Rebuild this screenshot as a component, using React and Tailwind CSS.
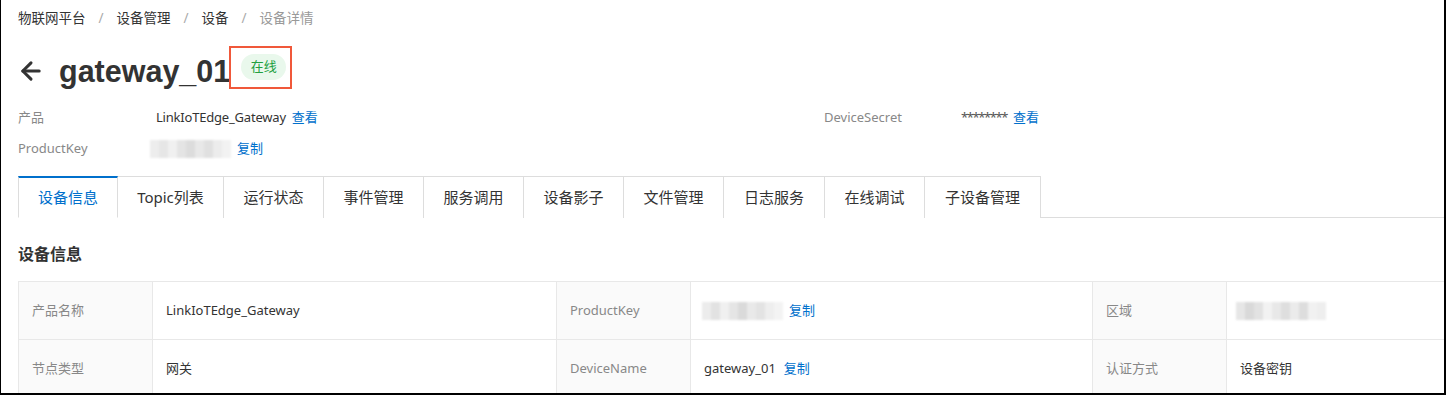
import { ArrowLeft } from "lucide-react";

const FONT = {
  fontFamily: '"Noto Sans", "Noto Sans CJK SC", sans-serif',
};

const crumbs = ["物联网平台", "设备管理", "设备", "设备详情"];

const tabs = [
  { label: "设备信息", w: "w-[100px]" },
  { label: "Topic列表", w: "w-[106px]" },
  { label: "运行状态", w: "w-[100px]" },
  { label: "事件管理", w: "w-[100px]" },
  { label: "服务调用", w: "w-[100px]" },
  { label: "设备影子", w: "w-[100px]" },
  { label: "文件管理", w: "w-[100px]" },
  { label: "日志服务", w: "w-[101px]" },
  { label: "在线调试", w: "w-[100px]" },
  { label: "子设备管理", w: "w-[116px]" },
];

// mosaic stand-in for the masked values in the screenshot
const Blurred = ({ shades, className = "" }) => (
  <span className={`inline-flex h-[18px] blur-[1.2px] ${className}`}>
    {shades.map((c, i) => (
      <span key={i} className="w-[9px] h-full" style={{ backgroundColor: c }} />
    ))}
  </span>
);

const Copy = ({ children = "复制" }) => (
  <a className="text-[#0070cc] cursor-pointer ml-[6px]">{children}</a>
);

const LabelCell = ({ children }) => (
  <div className="bg-[#fafafa] border-r border-b border-[#e8e8e8] pl-[13px] flex items-center text-[#888]">
    {children}
  </div>
);

const ValueCell = ({ children, last }) => (
  <div
    className={`border-b border-[#e8e8e8] pl-[13px] flex items-center text-[#333] ${
      last ? "" : "border-r"
    }`}
  >
    {children}
  </div>
);

export default function App() {
  return (
    <div
      style={FONT}
      className="w-[1446px] h-[395px] overflow-hidden bg-white border-l border-r-2 border-b-2 border-black text-[#333]"
    >
      <div className="pl-[17px]">
        {/* Breadcrumb */}
        <div className="h-[36px] flex items-center text-[13.5px]">
          {crumbs.map((c, i) => (
            <span key={c} className="flex items-center">
              <span className={i === crumbs.length - 1 ? "text-[#999]" : "text-[#333]"}>
                {c}
              </span>
              {i < crumbs.length - 1 && (
                <span className="text-[#aaa] mx-[13px]">/</span>
              )}
            </span>
          ))}
        </div>

        {/* Title */}
        <div className="mt-[10px] h-[50px] flex items-center">
          <ArrowLeft size={28} strokeWidth={2.6} className="text-[#333] -ml-[1px]" />
          <h1
            className="ml-[14px] text-[30.5px] font-bold text-[#333] leading-none"
            style={{ fontFamily: '"Liberation Sans", Arial, sans-serif' }}
          >
            gateway_01
          </h1>
          <div className="relative ml-[11px] mb-[9px]">
            <span className="flex items-center justify-center w-[45px] h-[26px] rounded-full bg-[#e9f8ec] text-[#22a03f] text-[13px]">
              在线
            </span>
            <div className="absolute -left-[12px] -top-[8px] w-[63px] h-[43px] border-2 border-[#f0583a] pointer-events-none" />
          </div>
        </div>

        {/* Summary */}
        <div className="mt-[6px] text-[13px]">
          <div className="h-[31px] flex items-center">
            <span className="w-[138px] text-[#888]">产品</span>
            <span className="w-[668px] flex items-center">
              <span className="text-[#333] tracking-[-0.2px]">LinkIoTEdge_Gateway</span>
              <Copy>查看</Copy>
            </span>
            <span className="w-[137px] text-[#888]">DeviceSecret</span>
            <span className="flex items-center">
              <span className="text-[#555] tracking-[-1.4px]">********</span>
              <Copy>查看</Copy>
            </span>
          </div>
          <div className="h-[31px] flex items-center">
            <span className="w-[132px] text-[#888]">ProductKey</span>
            <Blurred
              shades={["#ededed", "#e6e6e6", "#f0f0f0", "#e4e4e4", "#dcdcdc", "#e8e8e8", "#e0e0e0", "#ececec", "#f2f2f2"]}
            />
            <Copy />
          </div>
        </div>

        {/* Tabs */}
        <div className="mt-[12px] flex border-b border-[#ddd] h-[42px]">
          {tabs.map((t, i) => {
            const active = i === 0;
            return (
              <div
                key={t.label}
                className={`${t.w} -mb-px flex items-center justify-center text-[15px] border-r border-[#ddd] ${
                  active
                    ? "border-l border-t-2 border-t-[#0070cc] border-b border-b-white text-[#0070cc] bg-white"
                    : "border-t text-[#333] bg-white"
                }`}
              >
                {t.label}
              </div>
            );
          })}
        </div>

        {/* Section heading */}
        <div className="h-[63px] pt-[9px] flex items-center">
          <h2 className="text-[16px] font-bold text-[#333]">设备信息</h2>
        </div>

        {/* Info table */}
        <div className="grid grid-cols-[134px_404px_134px_402px_134px_1fr] auto-rows-[58px] border-t border-l border-[#e8e8e8] text-[13px]">
          <LabelCell>产品名称</LabelCell>
          <ValueCell>LinkIoTEdge_Gateway</ValueCell>
          <LabelCell>ProductKey</LabelCell>
          <ValueCell>
            <span className="flex items-center -ml-[2px]">
              <Blurred
                shades={["#ececec", "#e2e2e2", "#f0f0f0", "#e5e5e5", "#dadada", "#e9e9e9", "#e3e3e3", "#eeeeee", "#f3f3f3"]}
              />
              <Copy />
            </span>
          </ValueCell>
          <LabelCell>区域</LabelCell>
          <ValueCell last>
            <Blurred
              className="-ml-[4px]"
              shades={["#e6e6e6", "#d9d9d9", "#e2e2e2", "#f2f2f2", "#e8e8e8", "#dedede", "#ebebeb", "#dddddd", "#f1f1f1", "#eeeeee"]}
            />
          </ValueCell>

          <LabelCell>节点类型</LabelCell>
          <ValueCell>网关</ValueCell>
          <LabelCell>DeviceName</LabelCell>
          <ValueCell>
            gateway_01
            <Copy>
              <span className="ml-[2px]">复制</span>
            </Copy>
          </ValueCell>
          <LabelCell>认证方式</LabelCell>
          <ValueCell last>设备密钥</ValueCell>
        </div>
      </div>
    </div>
  );
}
